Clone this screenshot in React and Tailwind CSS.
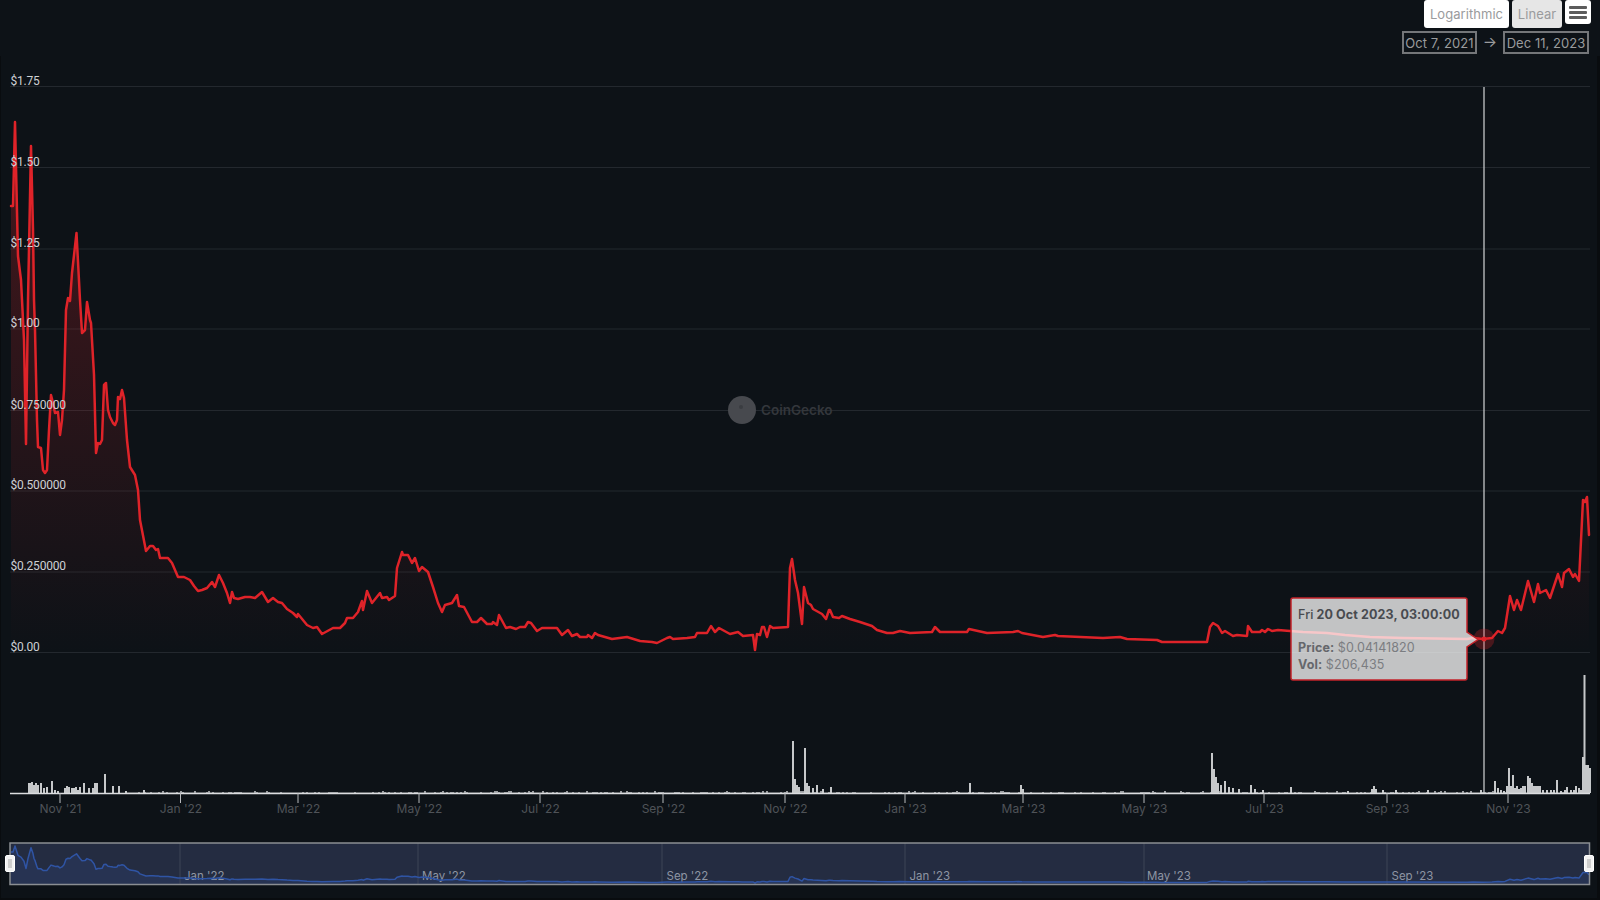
import { useMemo } from 'react'

// price line, page pixels, read off the reference
const LINE = [
  [11,206],[13,206],[15,122],[18,256],[21,280],[24,340],[26,444],[28,300],[31,146],[33,230],[34,300],[35,330],[37,420],[38,447],[41,448],[43,470],[45,473],[47,470],[49,430],[51,395],[53,403],[55,413],[58,412],[60,435],[62,420],[64,390],[66,310],[68,298],[70,301],[72,273],[76.5,233],[80,300],[82,333],[85,330],[87,302],[90,320],[91,323],[94,375],[96,453],[98,443],[100,444],[102,440],[104,385],[106,383],[108,410],[110,417],[113,423],[115,425],[117,420],[118,397],[120,399],[122,390],[124,398],[127,440],[130,467],[135,475],[138,490],[140,520],[146,551],[150,546],[153,546],[156,550],[158,549],[160,558],[168,558],[172,563],[175,570],[178,577],[184,577],[190,580],[194,586],[198,591],[202,590],[207,588],[212,582],[215,587],[219,575],[223,583],[227,593],[230,603],[232,592],[234,598],[238,599],[245,597],[250,597],[255,598],[262,592],[268,602],[273,598],[278,602],[282,603],[287,609],[293,613],[297,617],[298,614],[307,625],[313,628],[317,627],[322,634],[333,628],[340,628],[345,623],[347,618],[353,618],[358,612],[362,601],[363,610],[367,591],[372,603],[380,593],[382,598],[387,597],[389,600],[395,596],[397,568],[402,552],[403,555],[408,555],[412,563],[415,558],[419,571],[422,567],[428,572],[433,587],[438,603],[442,612],[445,605],[452,603],[457,595],[459,606],[464,607],[472,622],[477,622],[481,618],[487,624],[492,624],[493,622],[497,625],[499,615],[506,628],[510,627],[516,629],[520,627],[525,627],[528,622],[531,623],[537,631],[542,628],[557,628],[562,635],[568,630],[572,636],[577,634],[580,637],[587,637],[588,635],[592,638],[595,633],[598,635],[612,639],[627,637],[640,641],[652,642],[657,643],[667,638],[670,637],[673,639],[687,638],[695,637],[697,633],[707,633],[711,626],[715,632],[719,628],[730,634],[738,632],[743,636],[753,635],[755,650],[757,634],[760,635],[762,627],[764,627],[767,637],[770,626],[773,628],[788,627],[790,568],[792,559],[795,580],[798,593],[802,624],[804,587],[808,603],[811,605],[813,609],[822,614],[826,619],[829,610],[830,610],[833,617],[839,618],[842,616],[850,619],[860,622],[872,626],[877,630],[887,633],[893,633],[900,631],[910,633],[932,632],[935,627],[940,632],[967,632],[969,629],[987,633],[1013,632],[1018,631],[1022,633],[1043,637],[1055,635],[1058,636],[1103,638],[1120,637],[1127,639],[1157,640],[1162,642],[1207,642],[1210,627],[1213,623],[1218,626],[1222,633],[1225,631],[1233,636],[1237,635],[1247,636],[1248,626],[1252,632],[1260,632],[1262,630],[1265,632],[1268,629],[1272,631],[1278,630],[1290,631],[1303,632],[1327,633],[1345,635],[1370,637],[1403,638],[1467,639],[1473,638],[1483,639],[1492,638],[1498,631],[1502,633],[1505,628],[1510,596],[1514,610],[1517,600],[1521,610],[1528,581],[1534,602],[1538,584],[1540,593],[1546,590],[1550,598],[1558,574],[1562,587],[1564,573],[1569,569],[1573,577],[1575,574],[1579,581],[1583,500],[1585,502],[1587,497],[1589,535],
]

const GRID = [
  { y: 86.5, label: '$1.75' }, { y: 167.5, label: '$1.50' }, { y: 249, label: '$1.25' }, { y: 329, label: '$1.00' },
  { y: 410.5, label: '$0.750000' }, { y: 491, label: '$0.500000' }, { y: 572, label: '$0.250000' }, { y: 652.5, label: '$0.00' },
]

const TICKS = [
  [60,"Nov '21"],[180.5,"Jan '22"],[298,"Mar '22"],[419,"May '22"],[540,"Jul '22"],[663,"Sep '22"],[785,"Nov '22"],
  [905,"Jan '23"],[1023,"Mar '23"],[1144,"May '23"],[1264,"Jul '23"],[1387,"Sep '23"],[1508,"Nov '23"],
]

const NAV_TICKS = [[180,"Jan '22",4],[418,"May '22",4],[662,"Sep '22",4.5],[905,"Jan '23",4.5],[1144,"May '23",3],[1387,"Sep '23",4.5]]

const SPIKES = [
  [28,10],[29,10],[31,11],[33,8],[35,10],[37,8],[40,10],[43,5],[46,6],[51,12],[54,3],[57,2],[64,5],[66,7],[68,6],[71,5],[73,5],[75,6],[77,3],[79,6],[83,10],[88,5],[92,5],[94,10],[96,10],[104,19],[112,7],[118,7],[125,2],[143,3],
  [792,52],[794,14],[796,8],[798,6],[804,45],[806,10],[808,7],[812,5],[816,8],[822,4],[830,6],[969,10],[1020,8],[1022,4],
  [1211,40],[1213,24],[1215,16],[1217,10],[1220,8],[1224,12],[1228,6],[1232,5],[1238,4],[1250,8],[1254,4],[1262,3],[1290,6],
  [1347,2],[1371,4],[1373,7],[1375,4],[1382,3],[1395,3],[1427,3],[1480,3],
  [1494,12],[1497,5],[1500,3],[1503,2],[1506,7],[1508,25],[1510,7],[1512,18],[1514,5],[1516,7],[1518,4],[1520,5],[1522,7],[1524,7],[1527,17],[1529,15],[1531,10],[1533,7],[1535,7],[1537,7],[1539,7],[1542,3],[1546,3],[1550,3],[1553,3],[1556,13],[1560,2],[1564,3],[1566,6],[1570,3],[1573,3],[1575,7],[1578,5],[1580,3],[1582,36],[1583.5,118],[1585,28],[1587,28],[1589,25],
]

const toPath = (pts) => pts.map(([x, y], i) => (i ? 'L' : 'M') + x + ' ' + y).join(' ')

function ChartSvg() {
  const linePath = useMemo(() => toPath(LINE), [])
  const areaPath = linePath + ' L1589 653 L11 653 Z'
  const navPts = useMemo(() => LINE.map(([x, y]) => [x, +(846 + (y - 122) * 0.07).toFixed(1)]), [])
  const navPath = toPath(navPts)
  const noise = useMemo(() => {
    const out = []
    for (let x = 126; x < 1590; x += 2) {
      const r = Math.abs(Math.sin(x * 12.9898) * 43758.5453) % 1
      out.push([x, r < 0.6 ? 0.4 : r < 0.92 ? 1 : 2])
    }
    return out
  }, [])

  return (
    <svg width="1600" height="844" viewBox="0 56 1600 844" className="block" style={{ fontFamily: 'Inter, sans-serif' }}>
      <defs>
        <linearGradient id="area" gradientUnits="userSpaceOnUse" x1="0" y1="122" x2="0" y2="653">
          <stop offset="0" stopColor="#e0242a" stopOpacity="0.28" />
          <stop offset="1" stopColor="#e0242a" stopOpacity="0" />
        </linearGradient>
      </defs>

      <rect x="0" y="56" width="1" height="844" fill="#090c0f" />
      <rect x="1597" y="56" width="3" height="844" fill="#090c0f" />
      <rect x="0" y="898" width="1600" height="2" fill="#090c0f" />

      {GRID.map((g) => <line key={g.y} x1="10" x2="1590" y1={g.y} y2={g.y} stroke="#23282e" strokeWidth="1" />)}

      <circle cx="742" cy="410" r="14" fill="#47494e" />
      <circle cx="741" cy="407" r="2" fill="#3a3d41" />
      <text x="761" y="414.5" fontSize="13.5" fontWeight="600" fill="#34373c">CoinGecko</text>

      <path d={areaPath} fill="url(#area)" />

      {noise.map(([x, h]) => <rect key={x} x={x} y={793 - h} width="2" height={h} fill="#9a9da0" />)}
      {SPIKES.map(([x, h]) => <rect key={x} x={x} y={793 - h} width="2" height={h} fill="#c6c8ca" />)}

      <line x1="1484" x2="1484" y1="87" y2="793" stroke="#c4c6c8" strokeWidth="1.3" />
      <path d={linePath} fill="none" stroke="#df2329" strokeWidth="2.5" strokeLinejoin="round" strokeLinecap="round" />
      <circle cx="1484" cy="639" r="10.5" fill="#e0242a" fillOpacity="0.28" />
      <circle cx="1484" cy="639" r="2.5" fill="#e0242a" />

      {GRID.map((g) => (
        <text key={g.label} x="10.5" y={g.y - 2} fontSize="12" letterSpacing="-0.2" fill="#cdd0d4" style={{ fontFamily: 'Roboto, sans-serif' }}>{g.label}</text>
      ))}

      <line x1="10" x2="1590" y1="793.5" y2="793.5" stroke="#dcdde0" strokeWidth="1.4" />
      {TICKS.map(([x, label]) => (
        <g key={label}>
          <line x1={x} x2={x} y1="793" y2="803" stroke="#b8babd" strokeWidth="1" />
          <text x={x + 0.5} y="813" textAnchor="middle" fontSize="12" fill="#4f5358">{label}</text>
        </g>
      ))}

      {/* navigator */}
      <rect x="10" y="843" width="1579.5" height="41.5" fill="#242c41" />
      <path d={navPath + ' L1589 884 L11 884 Z'} fill="#2a3a60" fillOpacity="0.55" />
      {NAV_TICKS.map(([x]) => <line key={x} x1={x} x2={x} y1="843" y2="884" stroke="#3c4456" strokeWidth="1" />)}
      {NAV_TICKS.map(([x, label, dx]) => (
        <text key={label} x={x + dx} y="880" fontSize="11.5" fill="#8e95a3">{label}</text>
      ))}
      <path d={navPath} fill="none" stroke="#2f54a4" strokeWidth="1.5" strokeLinejoin="round" />
      <rect x="10" y="843" width="1579.5" height="41.5" fill="none" stroke="#8b8e93" strokeWidth="1.5" />
      {[5.5, 1584.5].map((x) => (
        <g key={x}>
          <rect x={x} y="855.5" width="9" height="16" rx="1.5" fill="#f2f2f2" stroke="#ffffff" />
          <line x1={x + 3.5} x2={x + 3.5} y1="859" y2="868" stroke="#a9a9a9" />
          <line x1={x + 5.5} x2={x + 5.5} y1="859" y2="868" stroke="#a9a9a9" />
        </g>
      ))}
    </svg>
  )
}

function Tooltip() {
  return (
    <div className="absolute left-[1290px] top-[597px] w-[189px] h-[85px] text-[12.5px] leading-[16px] tracking-[0.1px]">
      <svg width="189" height="85" viewBox="0 0 189 85" className="absolute left-0 top-0">
        <path d="M1 3 Q1 1 3 1 L175 1 Q177 1 177 3 L177 35 L188 42.5 L177 50 L177 81 Q177 83 175 83 L3 83 Q1 83 1 81 Z"
          fill="#ffffff" fillOpacity="0.75" stroke="#c3232a" strokeWidth="1.5" />
      </svg>
      <div className="relative pl-2 pt-[10px] text-[#44474c] whitespace-nowrap">
        <p className="font-bold text-[#484b50]"><span className="font-medium">Fri</span> 20 Oct 2023, 03:00:00</p>
        <p className="mt-[17px] text-[#7b7d81]"><span className="font-bold text-[#65676b]">Price:</span> $0.04141820</p>
        <p className="mt-px text-[#7b7d81]"><span className="font-bold text-[#65676b]">Vol:</span> $206,435</p>
      </div>
    </div>
  )
}

function Toolbar() {
  return (
    <div className="h-[56px] flex flex-col items-end pr-[9px] text-[13px] tracking-[0.05px] text-[#9a9b9d]">
      <div className="flex items-start gap-[3px]">
        <button className="h-[28px] w-[85px] pt-[2px] rounded-[3px] bg-white">Logarithmic</button>
        <button className="h-[28px] w-[50px] pt-[2px] rounded-[3px] bg-[#e6e6e6]">Linear</button>
        <button className="h-[24px] w-[26px] rounded-[3px] bg-white flex flex-col items-center justify-center gap-[2px]">
          <span className="block w-[18px] h-[3px] rounded-[1px] bg-[#5c5c5c]" />
          <span className="block w-[18px] h-[3px] rounded-[1px] bg-[#5c5c5c]" />
          <span className="block w-[18px] h-[3px] rounded-[1px] bg-[#5c5c5c]" />
        </button>
      </div>
      <div className="mt-[3px] flex items-center mr-[2px]">
        <span className="h-[23px] w-[75px] pt-[2px] border-2 border-[#747679] flex items-center justify-center">Oct 7, 2021</span>
        <span className="w-[26px] text-center text-[15px]">→</span>
        <span className="h-[23px] w-[86px] pt-[2px] border-2 border-[#747679] flex items-center justify-center">Dec 11, 2023</span>
      </div>
    </div>
  )
}

export default function App() {
  return (
    <div className="relative w-[1600px] h-[900px] overflow-hidden bg-[#0d1217]" style={{ fontFamily: 'Inter, sans-serif' }}>
      <Toolbar />
      <ChartSvg />
      <Tooltip />
    </div>
  )
}
